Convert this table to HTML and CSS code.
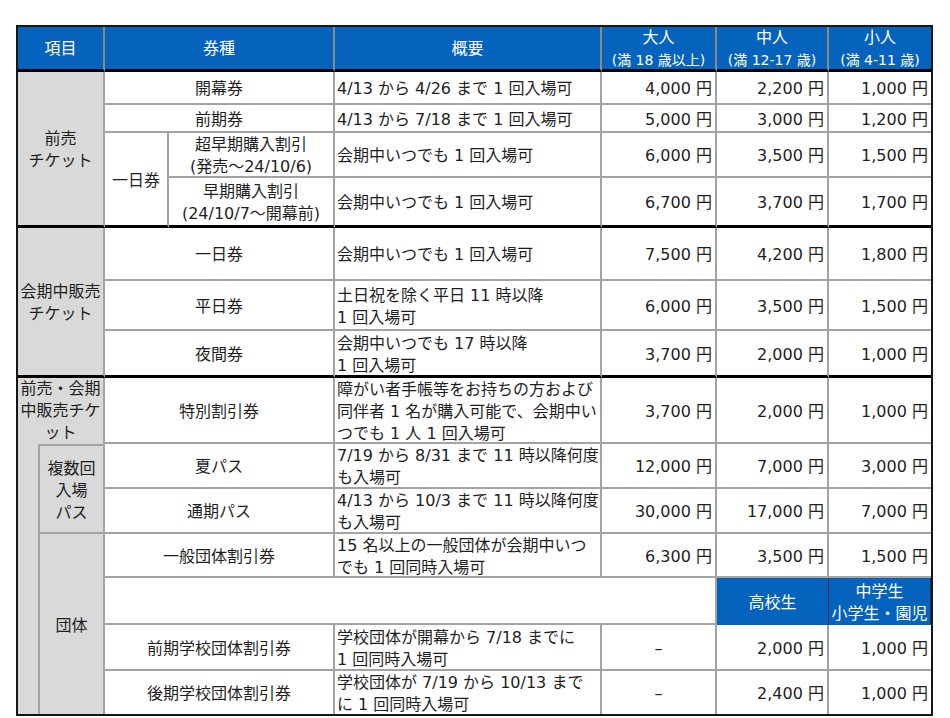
FILE: index.html
```html
<!DOCTYPE html>
<html lang="ja">
<head>
<meta charset="utf-8">
<title>チケット料金表</title>
<link rel="stylesheet" href="styles.css">
</head>
<body>
<div class="table">
  <!-- header -->
  <div class="c hd c2 tb"><span>項目</span></div>
  <div class="c hd c2 tb"><span>券種</span></div>
  <div class="c hd tb"><span>概要</span></div>
  <div class="c hd tb"><span>大人<br><small>(満 18 歳以上)</small></span></div>
  <div class="c hd tb"><span>中人<br><small>(満 12-17 歳)</small></span></div>
  <div class="c hd tb last"><span>小人<br><small>(満 4-11 歳)</small></span></div>

  <!-- 前売チケット -->
  <div class="c lb c2 r4 tb"><span>前売<br>チケット</span></div>
  <div class="c ctr c2"><span>開幕券</span></div>
  <div class="c txt"><span>4/13 から 4/26 まで 1 回入場可</span></div>
  <div class="c num"><span>4,000 円</span></div>
  <div class="c num"><span>2,200 円</span></div>
  <div class="c num last"><span>1,000 円</span></div>

  <div class="c ctr c2"><span>前期券</span></div>
  <div class="c txt"><span>4/13 から 7/18 まで 1 回入場可</span></div>
  <div class="c num"><span>5,000 円</span></div>
  <div class="c num"><span>3,000 円</span></div>
  <div class="c num last"><span>1,200 円</span></div>

  <div class="c ctr r2 tb"><span>一日券</span></div>
  <div class="c ctr"><span>超早期購入割引<br>(発売～24/10/6)</span></div>
  <div class="c txt"><span>会期中いつでも 1 回入場可</span></div>
  <div class="c num"><span>6,000 円</span></div>
  <div class="c num"><span>3,500 円</span></div>
  <div class="c num last"><span>1,500 円</span></div>

  <div class="c ctr tb"><span>早期購入割引<br>(24/10/7～開幕前)</span></div>
  <div class="c txt tb"><span>会期中いつでも 1 回入場可</span></div>
  <div class="c num tb"><span>6,700 円</span></div>
  <div class="c num tb"><span>3,700 円</span></div>
  <div class="c num tb last"><span>1,700 円</span></div>

  <!-- 会期中販売チケット -->
  <div class="c lb c2 r3 tb"><span>会期中販売<br>チケット</span></div>
  <div class="c ctr c2"><span>一日券</span></div>
  <div class="c txt"><span>会期中いつでも 1 回入場可</span></div>
  <div class="c num"><span>7,500 円</span></div>
  <div class="c num"><span>4,200 円</span></div>
  <div class="c num last"><span>1,800 円</span></div>

  <div class="c ctr c2"><span>平日券</span></div>
  <div class="c txt"><span>土日祝を除く平日 11 時以降<br>1 回入場可</span></div>
  <div class="c num"><span>6,000 円</span></div>
  <div class="c num"><span>3,500 円</span></div>
  <div class="c num last"><span>1,500 円</span></div>

  <div class="c ctr c2 tb"><span>夜間券</span></div>
  <div class="c txt tb"><span>会期中いつでも 17 時以降<br>1 回入場可</span></div>
  <div class="c num tb"><span>3,700 円</span></div>
  <div class="c num tb"><span>2,000 円</span></div>
  <div class="c num tb last"><span>1,000 円</span></div>

  <!-- 前売・会期中販売チケット -->
  <div class="c lb c2 nob top"><span>前売・会期<br>中販売チケ<br>ット</span></div>
  <div class="c ctr c2"><span>特別割引券</span></div>
  <div class="c txt"><span>障がい者手帳等をお持ちの方および<br>同伴者 1 名が購入可能で、会期中い<br>つでも 1 人 1 回入場可</span></div>
  <div class="c num"><span>3,700 円</span></div>
  <div class="c num"><span>2,000 円</span></div>
  <div class="c num last"><span>1,000 円</span></div>

  <div class="c lb strip r6"></div>
  <div class="c lb r2 bt"><span>複数回<br>入場<br>パス</span></div>
  <div class="c ctr c2"><span>夏パス</span></div>
  <div class="c txt"><span>7/19 から 8/31 まで 11 時以降何度<br>も入場可</span></div>
  <div class="c num"><span>12,000 円</span></div>
  <div class="c num"><span>7,000 円</span></div>
  <div class="c num last"><span>3,000 円</span></div>

  <div class="c ctr c2"><span>通期パス</span></div>
  <div class="c txt"><span>4/13 から 10/3 まで 11 時以降何度<br>も入場可</span></div>
  <div class="c num"><span>30,000 円</span></div>
  <div class="c num"><span>17,000 円</span></div>
  <div class="c num last"><span>7,000 円</span></div>

  <div class="c lb r4 bottom"><span>団体</span></div>
  <div class="c ctr c2"><span>一般団体割引券</span></div>
  <div class="c txt"><span>15 名以上の一般団体が会期中いつ<br>でも 1 回同時入場可</span></div>
  <div class="c num"><span>6,300 円</span></div>
  <div class="c num"><span>3,500 円</span></div>
  <div class="c num last"><span>1,500 円</span></div>

  <div class="c c4"></div>
  <div class="c hd sub"><span>高校生</span></div>
  <div class="c hd sub last"><span>中学生<br>小学生・園児</span></div>

  <div class="c ctr c2"><span>前期学校団体割引券</span></div>
  <div class="c txt"><span>学校団体が開幕から 7/18 までに<br>1 回同時入場可</span></div>
  <div class="c ctr"><span>–</span></div>
  <div class="c num"><span>2,000 円</span></div>
  <div class="c num last"><span>1,000 円</span></div>

  <div class="c ctr c2 bottom"><span>後期学校団体割引券</span></div>
  <div class="c txt bottom"><span>学校団体が 7/19 から 10/13 まで<br>に 1 回同時入場可</span></div>
  <div class="c ctr bottom"><span>–</span></div>
  <div class="c num bottom"><span>2,400 円</span></div>
  <div class="c num bottom last"><span>1,000 円</span></div>
</div>
</body>
</html>
```
FILE: styles.css
```css
html, body {
  margin: 0;
  padding: 0;
  background: #ffffff;
}

body {
  font-family: "DejaVu Sans", "Noto Sans CJK JP", sans-serif;
  font-size: 16px;
  line-height: 22px;
  color: #1e1e1e;
}

.table {
  display: grid;
  grid-template-columns: 22px 65px 64px 166px 267px 115px 112px 102px;
  grid-template-rows: 45px 33px 28px 45px 50px 53px 50px 47px 66px 45px 45px 44px 47px 46px 43px;
  width: 913px;
  margin: 25px 0 0 16px;
  border: 2px solid #161616;
  box-sizing: content-box;
}

.c {
  box-sizing: border-box;
  border-right: 2px solid #a3a3a3;
  border-bottom: 2px solid #a3a3a3;
  display: flex;
  align-items: center;
  justify-content: center;
  text-align: center;
  white-space: nowrap;
  overflow: visible;
  min-width: 0;
  min-height: 0;
  padding-top: 3px;
}

.c2 { grid-column: span 2; }
.c4 { grid-column: span 4; }
.r2 { grid-row: span 2; }
.r3 { grid-row: span 3; }
.r4 { grid-row: span 4; }
.r6 { grid-row: span 6; }

.hd {
  background: #0563be;
  color: #ffffff;
  border-right-color: #8a8a8a;
  padding-top: 2px;
}

.hd small {
  font-size: 14px;
  line-height: 20px;
}

.hd.sub {
  border-right: 1px solid #1b3558;
  border-bottom: 0;
}

.lb {
  background: #d9d9d9;
}

.strip {
  border-bottom: 0;
}

.nob {
  border-bottom: 0;
}

.top {
  align-items: flex-start;
  padding-top: 0;
}

.bt {
  border-top: 2px solid #a3a3a3;
}

.txt {
  justify-content: flex-start;
  text-align: left;
  padding-left: 2px;
}

.num {
  justify-content: flex-end;
  text-align: right;
  padding-right: 3px;
}

.tb {
  border-bottom: 3px solid #000000;
}

.last {
  border-right: 0;
}

.bottom {
  border-bottom: 0;
}
```
